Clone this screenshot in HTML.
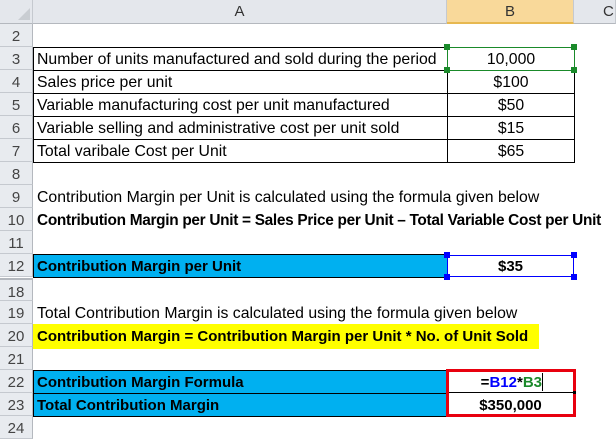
<!DOCTYPE html>
<html><head><meta charset="utf-8"><style>
body{margin:0;width:616px;height:439px;overflow:hidden;background:#fff;font-family:"Liberation Sans",sans-serif;position:relative}
div{position:absolute;box-sizing:border-box}
.hd{top:0;height:24px;background:#e4e7ec;border-right:1px solid #c5c9cf;border-bottom:1px solid #b4b8be;color:#333;font-size:15px;text-align:center;line-height:24px}
.rn{left:0;width:33px;height:23px;background:#e8ebef;border-bottom:1px solid #c5c9cf;border-right:1px solid #b4b8be;color:#444;font-size:15px;text-align:center;line-height:25px}
.t{font-size:15.8px;line-height:25px;white-space:nowrap;color:#000}
.b{font-weight:bold;font-size:15px}
.cell{border:1px solid #000;height:24px}
.h{width:6px;height:6px;background:#1a8a2a}
</style></head><body>
<div class="hd" style="left:0;width:33px"></div>
<div style="left:18px;top:8px;width:0;height:0;border-left:12px solid transparent;border-bottom:12px solid #c9cdd2"></div>
<div class="hd" style="left:33px;width:414px">A</div>
<div class="hd" style="left:447px;width:127px;background:#f9d99a;border-bottom:2px solid #e7b850">B</div>
<div class="hd" style="left:574px;width:42px;text-align:left;padding-left:29px">C</div>

<div class="rn" style="top:24px">2</div>
<div class="rn" style="top:47px">3</div>
<div class="rn" style="top:70px">4</div>
<div class="rn" style="top:93px">5</div>
<div class="rn" style="top:116px">6</div>
<div class="rn" style="top:139px">7</div>
<div class="rn" style="top:162px">8</div>
<div class="rn" style="top:185px">9</div>
<div class="rn" style="top:208px">10</div>
<div class="rn" style="top:231px">11</div>
<div class="rn" style="top:254px">12</div>
<div class="rn" style="top:278px;border-top:2px solid #b4b8be">18</div>
<div class="rn" style="top:301px">19</div>
<div class="rn" style="top:324px">20</div>
<div class="rn" style="top:347px">21</div>
<div class="rn" style="top:370px">22</div>
<div class="rn" style="top:393px">23</div>
<div class="rn" style="top:416px">24</div>

<div class="cell" style="left:33px;top:47px;width:415px"></div>
<div class="cell" style="left:33px;top:70px;width:415px"></div>
<div class="cell" style="left:33px;top:93px;width:415px"></div>
<div class="cell" style="left:33px;top:116px;width:415px"></div>
<div class="cell" style="left:33px;top:139px;width:415px"></div>
<div class="cell" style="left:447px;top:47px;width:128px"></div>
<div class="cell" style="left:447px;top:70px;width:128px"></div>
<div class="cell" style="left:447px;top:93px;width:128px"></div>
<div class="cell" style="left:447px;top:116px;width:128px"></div>
<div class="cell" style="left:447px;top:139px;width:128px"></div>
<div style="left:447px;top:47px;width:128px;height:24px;border:1px solid #1a8a2a"></div>
<div class="h" style="left:444px;top:44px"></div><div class="h" style="left:571px;top:44px"></div>
<div class="h" style="left:444px;top:67px"></div><div class="h" style="left:571px;top:67px"></div>

<div class="t" style="left:37px;top:47px">Number of units manufactured and sold during the period</div>
<div class="t" style="left:37px;top:70px">Sales price per unit</div>
<div class="t" style="left:37px;top:93px">Variable manufacturing cost per unit manufactured</div>
<div class="t" style="left:37px;top:116px">Variable selling and administrative cost per unit sold</div>
<div class="t" style="left:37px;top:139px">Total varibale Cost per Unit</div>
<div class="t" style="left:447px;width:128px;text-align:center;top:47px">10,000</div>
<div class="t" style="left:447px;width:128px;text-align:center;top:70px">$100</div>
<div class="t" style="left:447px;width:128px;text-align:center;top:93px">$50</div>
<div class="t" style="left:447px;width:128px;text-align:center;top:116px">$15</div>
<div class="t" style="left:447px;width:128px;text-align:center;top:139px">$65</div>

<div class="t" style="left:37px;top:185px">Contribution Margin per Unit is calculated using the formula given below</div>
<div class="t b" style="left:37px;top:208px;font-size:15.4px;letter-spacing:-0.3px">Contribution Margin per Unit = Sales Price per Unit – Total Variable Cost per Unit</div>

<div style="left:33px;top:254px;width:415px;height:24px;background:#00b0f0;border:1px solid #000"></div>
<div class="t b" style="left:37px;top:254px">Contribution Margin per Unit</div>
<div style="left:447px;top:255px;width:127px;height:22px;border:1px solid #0000ff"></div>
<div class="t b" style="left:447px;width:127px;text-align:center;top:254px">$35</div>
<div class="h" style="left:444px;top:252px;background:#00f"></div><div class="h" style="left:571px;top:252px;background:#00f"></div>
<div class="h" style="left:444px;top:274px;background:#00f"></div><div class="h" style="left:571px;top:274px;background:#00f"></div>

<div class="t" style="left:37px;top:301px">Total Contribution Margin is calculated using the formula given below</div>
<div style="left:33px;top:324px;width:506px;height:25px;background:#ffff00"></div>
<div class="t b" style="left:37px;top:324px">Contribution Margin = Contribution Margin per Unit * No. of Unit Sold</div>

<div style="left:33px;top:370px;width:415px;height:24px;background:#00b0f0;border:1px solid #000"></div>
<div style="left:33px;top:393px;width:415px;height:24px;background:#00b0f0;border:1px solid #000"></div>
<div class="t b" style="left:37px;top:370px">Contribution Margin Formula</div>
<div class="t b" style="left:37px;top:393px">Total Contribution Margin</div>
<div style="left:447px;top:392px;width:128px;height:1px;background:#000"></div>
<div style="left:446px;top:369px;width:130px;height:48px;border:3px solid #e8000e"></div>
<div class="t b" style="left:447px;width:95px;text-align:right;top:370px"><span>=</span><span style="color:#0000ff">B12</span>*<span style="color:#1a8a2a">B3</span></div>
<div style="left:542px;top:373px;width:1px;height:18px;background:#000"></div>
<div class="t b" style="left:447px;width:127px;text-align:center;top:393px">$350,000</div>
<div style="left:573px;top:391px;width:3px;height:3px;background:#000"></div>
</body></html>
